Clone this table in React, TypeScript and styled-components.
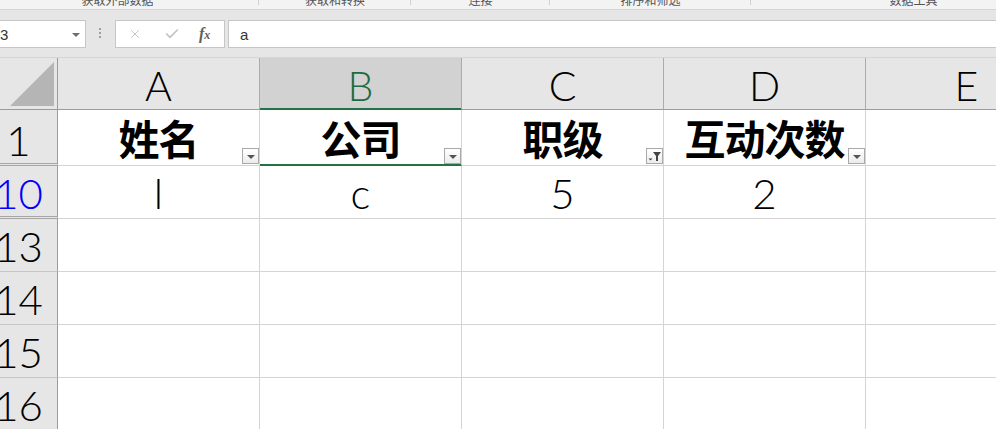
import { Fragment } from 'react';
import styled, { createGlobalStyle, css } from 'styled-components';
import { X, Check } from 'lucide-react';

const GlobalStyle = createGlobalStyle`
  html, body {
    margin: 0;
    padding: 0;
    background: #ffffff;
    overflow: hidden;
  }
`;

const Page = styled.div`
  width: 996px;
  height: 429px;
  overflow: hidden;
  background: #e6e6e6;
  font-family: 'Liberation Sans', 'Noto Sans CJK SC', sans-serif;
`;

/* ribbon group labels, cut at the top */
const Ribbon = styled.div`
  height: 9px;
  background: #f3f3f3;
  border-bottom: 1px solid #d5d5d5;
  overflow: hidden;
`;

const RibbonGroups = styled.div`
  display: flex;
  margin-left: -24px;
`;

const RibbonGroup = styled.div<{ $width: number; $last?: boolean }>`
  position: relative;
  flex: 0 0 ${(p) => p.$width}px;
  height: 9px;
  display: flex;
  justify-content: center;
  ${(p) =>
    !p.$last &&
    css`
      &::after {
        content: '';
        position: absolute;
        right: 0;
        top: 0;
        width: 1px;
        height: 5px;
        background: #d0d0d0;
      }
    `}
`;

const RibbonLabel = styled.span`
  margin-top: -8px;
  font-family: 'Noto Sans CJK SC', sans-serif;
  font-size: 12px;
  line-height: 16px;
  color: #555555;
`;

/* formula bar */
const FormulaBar = styled.div`
  height: 47px;
  box-sizing: border-box;
  padding-top: 10px;
  display: flex;
  align-items: flex-start;
`;

const Box = styled.div`
  height: 28px;
  box-sizing: border-box;
  background: #ffffff;
  border: 1px solid #c6c6c6;
  display: flex;
  align-items: center;
`;

const NameBox = styled(Box)`
  margin-left: -20px;
  width: 106px;
  padding-left: 19px;
  font-size: 15px;
  color: #333333;
  justify-content: space-between;
  padding-right: 5px;
`;

const DropArrow = styled.span`
  width: 0;
  height: 0;
  border-left: 4px solid transparent;
  border-right: 4px solid transparent;
  border-top: 4px solid #6f6f6f;
  margin-top: 1px;
`;

const Dots = styled.div`
  width: 2px;
  margin: 8px 14px 0 13px;
  display: flex;
  flex-direction: column;
  gap: 2px;
  & > span {
    width: 2px;
    height: 2px;
    background: #a0a0a0;
  }
`;

const FuncBox = styled(Box)`
  width: 110px;
  margin-right: 3px;
  padding-left: 12px;
  gap: 22px;
  color: #c4c4c4;
`;

const Fx = styled.span`
  font-family: 'Liberation Serif', serif;
  font-style: italic;
  font-weight: 700;
  font-size: 16px;
  color: #606060;
  margin-left: -3px;
  & > sub {
    font-size: 12px;
    vertical-align: baseline;
  }
`;

const InputBox = styled(Box)`
  flex: 1;
  margin-right: -10px;
  padding-left: 11px;
  font-size: 15px;
  color: #333333;
`;

/* sheet */
const Sheet = styled.div`
  border-top: 1px solid #d5d5d5;
  margin-left: -20px;
  display: grid;
  grid-template-columns: 78px repeat(5, 202px);
  grid-template-rows: 52px 56px repeat(5, 53px);
  background: #ffffff;
`;

const Corner = styled.div`
  background: #e6e6e6;
  border-right: 1px solid #9b9b9b;
  border-bottom: 1px solid #9b9b9b;
  box-sizing: border-box;
  display: flex;
  justify-content: flex-end;
  align-items: flex-end;
  padding: 0 3px 3px 0;
  &::before {
    content: '';
    width: 44px;
    height: 44px;
    background: #b5b5b5;
    clip-path: polygon(100% 0, 100% 100%, 0 100%);
  }
`;

const ColHeader = styled.div<{ $selected?: boolean }>`
  box-sizing: border-box;
  background: ${(p) => (p.$selected ? '#d2d2d2' : '#e6e6e6')};
  color: ${(p) => (p.$selected ? '#1e6b3f' : '#000000')};
  border-right: 1px solid #ababab;
  border-bottom: 1px solid ${(p) => (p.$selected ? '#217346' : '#9b9b9b')};
  box-shadow: ${(p) => (p.$selected ? 'inset 0 -1px 0 #217346' : 'none')};
  display: flex;
  justify-content: center;
  align-items: flex-end;
  padding-bottom: 3px;
  font-family: 'Lato', 'Liberation Sans', sans-serif;
  font-weight: 300;
  font-size: 41px;
  line-height: 1;
`;

const RowHeader = styled.div<{ $hiddenBelow?: boolean; $filtered?: boolean }>`
  box-sizing: border-box;
  background: #e6e6e6;
  color: ${(p) => (p.$filtered ? '#0000ff' : '#000000')};
  border-right: 1px solid #9b9b9b;
  border-bottom: ${(p) => (p.$hiddenBelow ? '3px double #a6a6a6' : '1px solid #c6c6c6')};
  display: flex;
  justify-content: center;
  align-items: flex-end;
  padding-bottom: ${(p) => (p.$hiddenBelow ? 2 : 4)}px;
  font-family: 'Lato', 'Liberation Sans', sans-serif;
  font-weight: 300;
  font-size: 42px;
  line-height: 1;
`;

const Cell = styled.div<{ $title?: boolean; $active?: boolean }>`
  position: relative;
  box-sizing: border-box;
  border-right: 1px solid #d4d4d4;
  border-bottom: 1px solid ${(p) => (p.$active ? '#217346' : '#d4d4d4')};
  box-shadow: ${(p) => (p.$active ? 'inset 0 -1px 0 #217346' : 'none')};
  display: flex;
  justify-content: center;
  align-items: ${(p) => (p.$title ? 'center' : 'flex-end')};
  padding-bottom: ${(p) => (p.$title ? 0 : 4)}px;
  ${(p) =>
    p.$title
      ? css`
          font-family: 'Noto Sans CJK SC', sans-serif;
          font-weight: 700;
          font-size: 41px;
          line-height: 1;
          letter-spacing: -1px;
        `
      : css`
          font-family: 'Lato', 'Liberation Sans', sans-serif;
          font-weight: 300;
          font-size: 42px;
          line-height: 1;
        `}
`;

const FilterButton = styled.span`
  position: absolute;
  right: 0;
  bottom: 1px;
  width: 17px;
  height: 16px;
  box-sizing: border-box;
  border: 1px solid #a9a9a9;
  background: linear-gradient(#ffffff, #ececec);
  display: flex;
  align-items: center;
  justify-content: center;
`;

const FilterArrow = styled.span`
  width: 0;
  height: 0;
  margin-top: 2px;
  border-left: 4px solid transparent;
  border-right: 4px solid transparent;
  border-top: 4px solid #555555;
`;

const FunnelIcon = () => (
  <svg width="15" height="14" viewBox="0 0 15 14">
    <path d="M6 3h8l-3 4v5h-2V7z" fill="#444444" />
    <path d="M1.5 9.5h4l-2 2z" fill="#444444" />
  </svg>
);

type Filter = 'arrow' | 'funnel' | null;

type Row = {
  num: string;
  filtered?: boolean;
  hiddenBelow?: boolean;
  title?: boolean;
  cells: string[];
  filters?: Filter[];
};

const columns = ['A', 'B', 'C', 'D', 'E'];

const rows: Row[] = [
  {
    num: '1',
    hiddenBelow: true,
    title: true,
    cells: ['姓名', '公司', '职级', '互动次数', ''],
    filters: ['arrow', 'arrow', 'funnel', 'arrow', null],
  },
  { num: '10', filtered: true, hiddenBelow: true, cells: ['l', 'c', '5', '2', ''] },
  { num: '13', cells: ['', '', '', '', ''] },
  { num: '14', cells: ['', '', '', '', ''] },
  { num: '15', cells: ['', '', '', '', ''] },
  { num: '16', cells: ['', '', '', '', ''] },
];

const ribbonGroups = [
  { label: '获取外部数据', width: 283 },
  { label: '获取和转换', width: 152 },
  { label: '连接', width: 139 },
  { label: '排序和筛选', width: 201 },
  { label: '数据工具', width: 325, last: true },
];

const App = () => {
  return (
    <Page>
      <GlobalStyle />
      <Ribbon>
        <RibbonGroups>
          {ribbonGroups.map((g) => (
            <RibbonGroup key={g.label} $width={g.width} $last={g.last}>
              <RibbonLabel>{g.label}</RibbonLabel>
            </RibbonGroup>
          ))}
        </RibbonGroups>
      </Ribbon>
      <FormulaBar>
        <NameBox>
          <span>3</span>
          <DropArrow />
        </NameBox>
        <Dots>
          <span />
          <span />
          <span />
        </Dots>
        <FuncBox>
          <X size={14} strokeWidth={1.6} />
          <Check size={16} strokeWidth={2.6} />
          <Fx>
            f<sub>x</sub>
          </Fx>
        </FuncBox>
        <InputBox>a</InputBox>
      </FormulaBar>
      <Sheet>
        <Corner />
        {columns.map((c) => (
          <ColHeader key={c} $selected={c === 'B'}>
            {c}
          </ColHeader>
        ))}
        {rows.map((r) => (
          <Fragment key={r.num}>
            <RowHeader $filtered={r.filtered} $hiddenBelow={r.hiddenBelow}>
              {r.num}
            </RowHeader>
            {r.cells.map((v, i) => (
              <Cell key={`${r.num}-${i}`} $title={r.title} $active={r.num === '1' && i === 1}>
                {v}
                {r.filters && r.filters[i] && (
                  <FilterButton>{r.filters[i] === 'funnel' ? <FunnelIcon /> : <FilterArrow />}</FilterButton>
                )}
              </Cell>
            ))}
          </Fragment>
        ))}
      </Sheet>
    </Page>
  );
};

export default App;
